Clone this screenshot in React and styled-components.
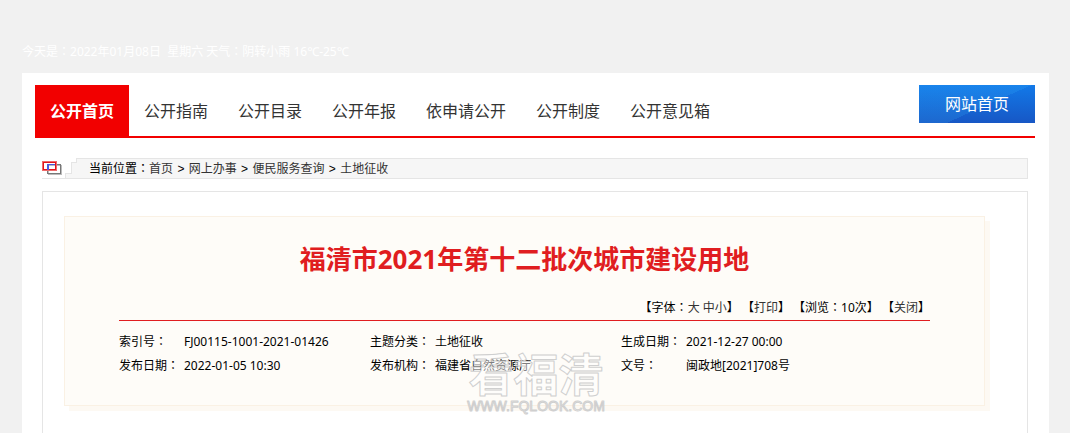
import React from "react";
import styled, { createGlobalStyle } from "styled-components";

const GlobalStyle = createGlobalStyle`
  * {
    box-sizing: border-box;
  }
  body {
    margin: 0;
    background-color: #f1f1f1;
    color: #000;
    font-family: "Noto Sans", "Noto Sans CJK SC", sans-serif;
    font-size: 12px;
    line-height: 24px;
  }
  a {
    color: #333;
    text-decoration: none;
  }
`;

const Page = styled.div`
  min-height: 100vh;
  padding: 40px 21px 0 22px;
  display: flex;
  flex-direction: column;
`;

const TopInfo = styled.div`
  height: 33px;
  color: #fff;
  white-space: pre;
`;

const Colon = styled.span`
  font-family: "Noto Sans CJK TC", sans-serif;
  line-height: 1;
`;

const Content = styled.main`
  flex: 1;
  display: flex;
  flex-direction: column;
  background-color: #fff;
  padding: 12px 14px 0 13px;
`;

const Nav = styled.nav`
  display: flex;
  justify-content: space-between;
  align-items: flex-start;
  border-bottom: 2px solid #f20000;
`;

const Menu = styled.ul`
  display: flex;
  list-style: none;
  margin: 0;
  padding: 0;
`;

const MenuLink = styled.a`
  display: block;
  height: 51px;
  padding: 0 15px;
  font-size: 16px;
  line-height: 52px;
  white-space: nowrap;
  color: ${(props) => (props.$active ? "#fff" : "#333")};
  font-weight: ${(props) => (props.$active ? "bold" : "normal")};
  background-color: ${(props) => (props.$active ? "#f20000" : "transparent")};
`;

const HomeLink = styled.a`
  width: 116px;
  height: 38px;
  line-height: 38px;
  color: #fff;
  font-size: 16px;
  text-align: center;
  background:
    linear-gradient(156deg, rgba(60, 190, 255, 0.16) 56%, transparent 56%),
    linear-gradient(#1279e8, #1757c5);
`;

const Body = styled.div`
  flex: 1;
  display: flex;
  flex-direction: column;
  padding: 20px 7px 0;
`;

const Position = styled.div`
  display: flex;
  height: 21px;
`;

const PositionMark = styled.svg`
  flex: none;
  width: 36px;
  height: 21px;
`;

const PositionText = styled.div`
  flex: 1;
  padding-left: 11px;
  line-height: 20px;
  white-space: pre;
  background-color: #f6f6f6;
  border: 1px solid #e5e5e5;
  border-left: 0;
`;

const Arrow = styled.span`
  padding: 0 1px;
  font-family: "Liberation Sans", sans-serif;
`;

const Panel = styled.section`
  flex: 1;
  margin-top: 12px;
  padding: 24px 42px 26px 21px;
  border: 1px solid #e5e5e5;
  border-bottom: 0;
`;

const Card = styled.article`
  position: relative;
  padding: 24px 54px 27px;
  background-color: #fefcf8;
  border: 1px solid #faf1e4;
  box-shadow: 5px 5px 0 #fdf9f3;
`;

const Title = styled.h1`
  margin: 0;
  color: #e01d20;
  font-size: 26px;
  line-height: 36px;
  text-align: center;
`;

const Tools = styled.div`
  margin-top: 18px;
  height: 26px;
  line-height: 26px;
  text-align: right;
  border-bottom: 1px solid #e01d20;
`;

const Meta = styled.table`
  width: 100%;
  margin-top: 9px;
  border-collapse: collapse;
  table-layout: fixed;

  th,
  td {
    height: 24px;
    padding: 0;
    text-align: left;
    font-weight: normal;
    line-height: 24px;
    vertical-align: top;
    white-space: nowrap;
  }
`;

const LabelCol = styled.col`
  width: 65px;
`;

const ValueCol = styled.col`
  width: ${(props) => (props.$wide ? "186px" : "auto")};
`;

const Watermark = styled.svg`
  position: absolute;
  left: 400px;
  bottom: -12px;
  width: 144px;
  height: 72px;
  overflow: visible;
  pointer-events: none;
`;

const menu = ["公开首页", "公开指南", "公开目录", "公开年报", "依申请公开", "公开制度", "公开意见箱"];

const path = ["首页", "网上办事", "便民服务查询", "土地征收"];

const rows = [
  [
    ["索引号", "FJ00115-1001-2021-01426"],
    ["主题分类", "土地征收"],
    ["生成日期", "2021-12-27 00:00"],
  ],
  [
    ["发布日期", "2022-01-05 10:30"],
    ["发布机构", "福建省自然资源厅"],
    ["文号", "闽政地[2021]708号"],
  ],
];

const App = () => {
  return (
    <Page>
      <GlobalStyle />
      <TopInfo>
        今天是<Colon>：</Colon>2022年01月08日{"  "}星期六 天气<Colon>：</Colon>阴转小雨 16℃-25℃
      </TopInfo>
      <Content>
        <Nav>
          <Menu>
            {menu.map((item, i) => (
              <li key={item}>
                <MenuLink href="#" $active={i === 0}>{item}</MenuLink>
              </li>
            ))}
          </Menu>
          <HomeLink href="#">网站首页</HomeLink>
        </Nav>
        <Body>
          <Position>
            <PositionMark viewBox="0 0 36 21" shapeRendering="crispEdges" aria-hidden="true">
              <path d="M36 0H34V4H29V15H23V20H36Z" fill="#f6f6f6" />
              <path d="M36 0.5H34.5V4.5H29.5V15.5H23.5V20.5M0 20.5H36" fill="none" stroke="#e5e5e5" />
              <rect x="6.5" y="7.5" width="13" height="9" fill="none" stroke="#bbb" />
              <rect x="5.5" y="6.5" width="13" height="9" fill="none" stroke="#777" />
              <rect x="0.5" y="3.5" width="14" height="9" fill="none" stroke="#ee6a6a" />
              <rect x="1.5" y="4.5" width="12" height="7" fill="none" stroke="#e0141c" />
              <path d="M6 6.5H13M5.5 6V12M6.5 7V12" fill="none" stroke="#4a56dc" />
            </PositionMark>
            <PositionText>
              当前位置<Colon>：</Colon>
              {path.map((item, i) => (
                <React.Fragment key={item}>
                  {i > 0 && <Arrow>{" > "}</Arrow>}
                  <a href="#">{item}</a>
                </React.Fragment>
              ))}
            </PositionText>
          </Position>
          <Panel>
            <Card>
              <Title>福清市2021年第十二批次城市建设用地</Title>
              <Tools>
                【字体<Colon>：</Colon><a href="#">大</a> <a href="#">中</a><a href="#">小</a>】
                {" "}【<a href="#">打印</a>】 【浏览<Colon>：</Colon>10次】 【<a href="#">关闭</a>】
              </Tools>
              <Meta>
                <colgroup>
                  <LabelCol />
                  <ValueCol $wide />
                  <LabelCol />
                  <ValueCol $wide />
                  <LabelCol />
                  <ValueCol />
                </colgroup>
                <tbody>
                  {rows.map((row) => (
                    <tr key={row[0][0]}>
                      {row.map(([label, value]) => (
                        <React.Fragment key={label}>
                          <th scope="row">{label}<Colon>：</Colon></th>
                          <td>{value}</td>
                        </React.Fragment>
                      ))}
                    </tr>
                  ))}
                </tbody>
              </Meta>
              <Watermark viewBox="0 0 144 72">
                <g
                  fill="#fff"
                  fillOpacity="0.5"
                  stroke="#cfcfcf"
                  strokeWidth="1"
                  strokeLinejoin="round"
                  textAnchor="middle"
                >
                  <text x="71" y="47" fontSize="45" fontWeight="bold">看福清</text>
                  <text x="71" y="66" fontSize="14" fontFamily="Liberation Sans, sans-serif">
                    WWW.FQLOOK.COM
                  </text>
                </g>
              </Watermark>
            </Card>
          </Panel>
        </Body>
      </Content>
    </Page>
  );
};

export default App;
